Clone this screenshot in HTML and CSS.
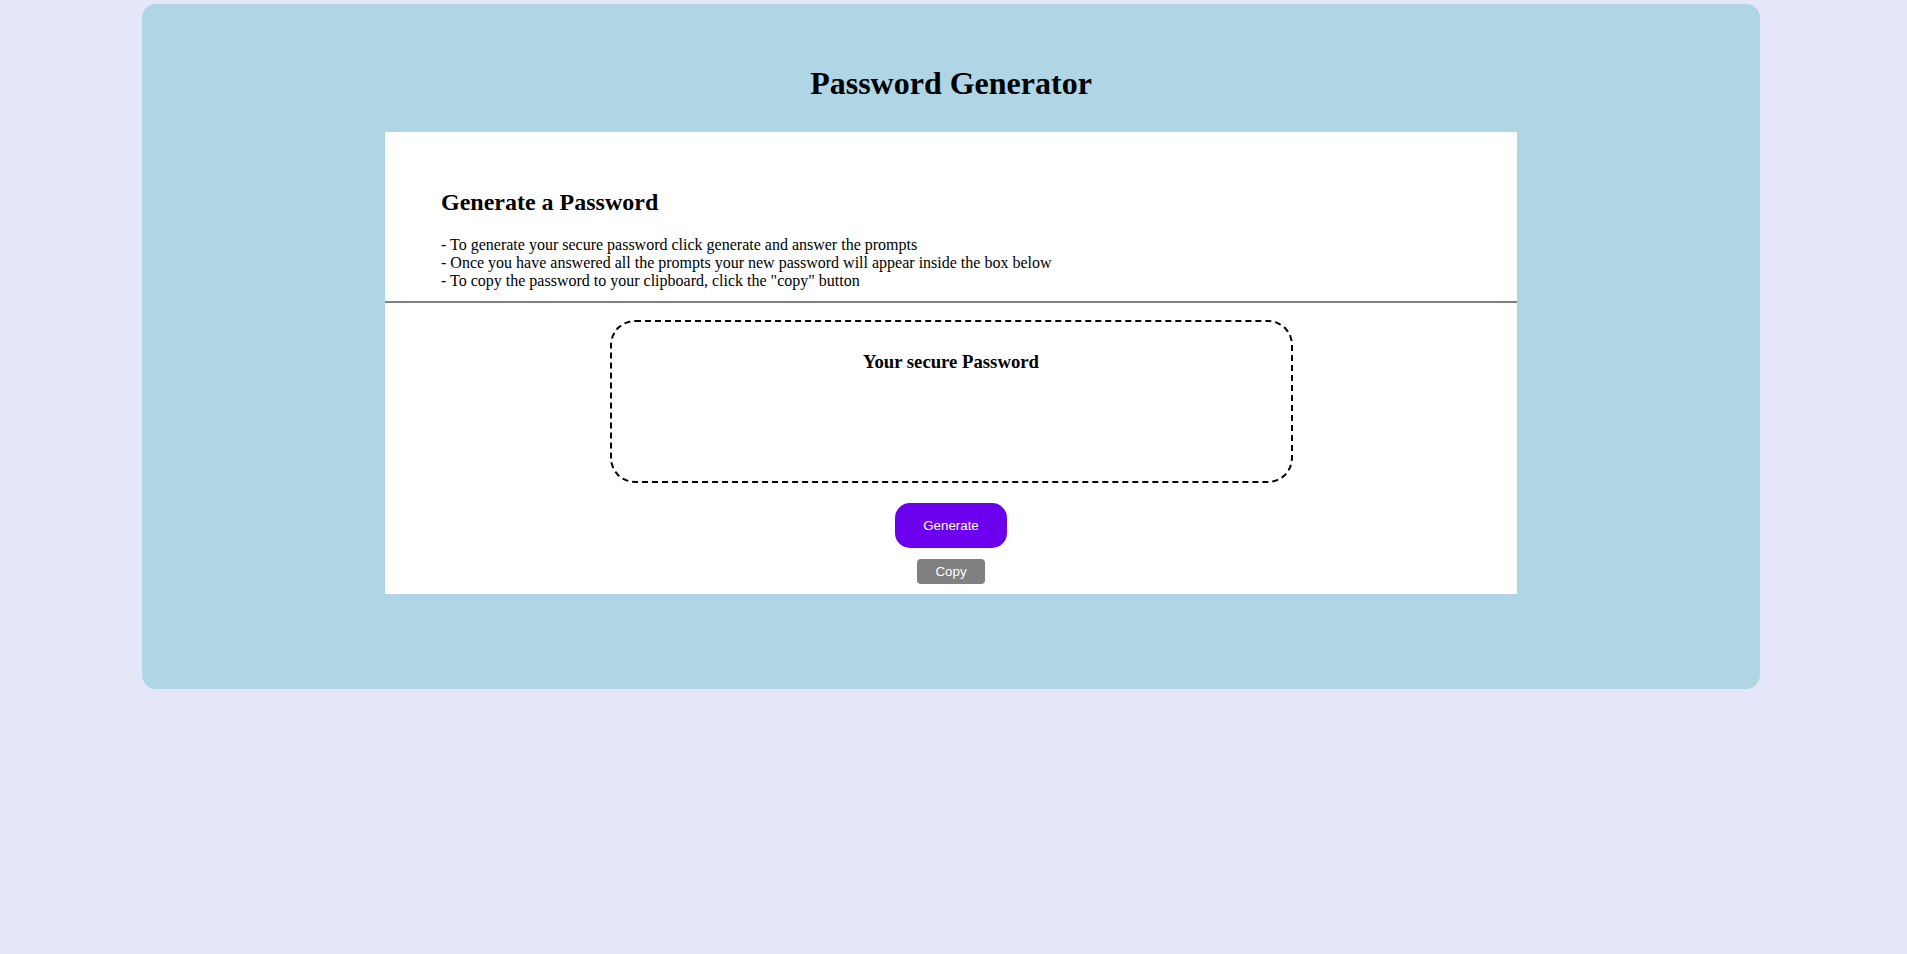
FILE: index.html
```html
<!DOCTYPE html>
<html lang="en">
<head>
<meta charset="utf-8">
<title>Password Generator</title>
<link rel="stylesheet" href="styles.css">
</head>
<body>
  <div class="wrapper">
    <h1 class="title">Password Generator</h1>
    <div class="card">
      <div class="card-header">
        <h2 class="card-title">Generate a Password</h2>
        <div class="instructions">
          <div>- To generate your secure password click generate and answer the prompts</div>
          <div>- Once you have answered all the prompts your new password will appear inside the box below</div>
          <div>- To copy the password to your clipboard, click the "copy" button</div>
        </div>
      </div>
      <hr class="divider">
      <div class="card-body">
        <div class="password-box">
          <h3 class="password-label">Your secure Password</h3>
        </div>
        <button class="btn btn-generate" type="button">Generate</button>
        <button class="btn btn-copy" type="button">Copy</button>
      </div>
    </div>
  </div>
</body>
</html>
```

FILE: styles.css
```css
html, body {
  margin: 0;
  padding: 0;
}

body {
  background: #e6e6fa;
  font-family: "Liberation Serif", "Times New Roman", serif;
  color: #000;
}

.wrapper {
  margin: 4px 147px 0 142px;
  background: #b0d6e6;
  border-radius: 14px;
  padding: 61px 243px 95px;
}

.title {
  margin: 0 0 30px;
  font-size: 32px;
  line-height: 37px;
  font-weight: bold;
  text-align: center;
}

.card {
  background: #fff;
  padding-bottom: 10px;
}

.card-header {
  padding: 56px 56px 11px;
}

.card-title {
  margin: 0 0 20px;
  font-size: 24px;
  line-height: 28px;
  font-weight: bold;
}

.instructions {
  font-size: 16px;
  line-height: 18px;
}

.divider {
  margin: 0;
  border: none;
  border-top: 2px solid #808080;
  height: 0;
}

.card-body {
  display: flex;
  flex-direction: column;
  align-items: center;
}

.password-box {
  box-sizing: border-box;
  width: 683px;
  height: 163px;
  margin-top: 17px;
  padding-top: 29px;
  border: 2px dashed #000;
  border-radius: 25px;
  text-align: center;
}

.password-label {
  margin: 0;
  font-size: 18.72px;
  line-height: 22px;
  font-weight: bold;
}

.btn {
  border: none;
  color: #fff;
  font-family: "Liberation Sans", Arial, sans-serif;
  font-size: 13.33px;
  cursor: pointer;
}

.btn-generate {
  margin-top: 20px;
  height: 45px;
  padding: 0 28px;
  border-radius: 15px;
  background: #6c00ee;
}

.btn-copy {
  margin-top: 11px;
  height: 25px;
  padding: 0 18px;
  border-radius: 4px;
  background: #808080;
}
```
